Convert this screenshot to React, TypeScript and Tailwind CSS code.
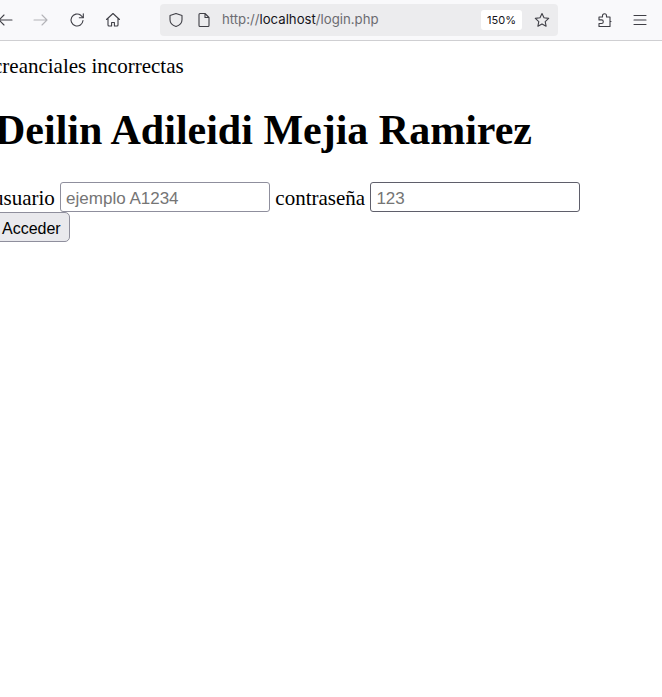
const ToolbarIcon = ({ children, color = "#3f3f46" }: { children: React.ReactNode; color?: string }) => (
  <svg width="16" height="16" viewBox="0 0 16 16" fill="none" stroke={color} strokeWidth="1.1" strokeLinecap="round" strokeLinejoin="round" className="shrink-0">
    {children}
  </svg>
);

export default function App() {
  return (
    <div className="min-h-screen overflow-hidden bg-white font-['Liberation_Serif',serif] text-[21px] text-black">
      {/* Browser toolbar */}
      <div className="flex h-[41px] items-center border-b border-[#cfcfd2] bg-[#f9f9fb]">
        <div className="-ml-[3px] flex items-center gap-5">
          <ToolbarIcon>
            <path d="M15 8H2M7 3L2 8l5 5" />
          </ToolbarIcon>
          <ToolbarIcon color="#b4b4b8">
            <path d="M1 8h13M9 3l5 5-5 5" />
          </ToolbarIcon>
          <ToolbarIcon>
            <path d="M14 8.500A6 6 0 1 1 11.800 3.300L14 5.300" />
            <path d="M14.300 1.800v4h-4" />
          </ToolbarIcon>
          <ToolbarIcon>
            <path d="M1.500 7.500L8 1.500l6.500 6M3 6.500V13a1 1 0 0 0 1 1h2.600v-3.500h2.800V14H12a1 1 0 0 0 1-1V6.500" />
          </ToolbarIcon>
        </div>
        <div className="ml-[39px] flex h-8 w-[398px] items-center rounded bg-[#ececee] pr-2 pl-2 font-['Inter',sans-serif] text-[13.2px] text-[#6b6b70]">
          <ToolbarIcon>
            <path d="M8 1.500l6 2v4.200c0 3.300-2.600 5.700-6 6.800-3.400-1.100-6-3.500-6-6.800V3.500z" />
          </ToolbarIcon>
          <span className="ml-3">
            <ToolbarIcon>
              <path d="M3 2.500a1 1 0 0 1 1-1h5l4 4v8a1 1 0 0 1-1 1H4a1 1 0 0 1-1-1zM9 1.500v4h4" />
            </ToolbarIcon>
          </span>
          <span className="ml-[10px]">
            http://<span className="text-[#15141a]">localhost</span>/login.php
          </span>
          <span className="ml-auto flex h-5 w-[41px] items-center justify-center rounded-[3px] bg-white text-[11px] text-[#15141a]">150%</span>
          <span className="ml-3">
            <ToolbarIcon>
              <path d="M8 1.500l2 4.300 4.700.6-3.500 3.200.9 4.600L8 11.900l-4.100 2.300.9-4.600L1.300 6.400 6 5.800z" />
            </ToolbarIcon>
          </span>
        </div>
        <div className="ml-[39px] flex items-center gap-[19px]">
          <ToolbarIcon>
            <path d="M2 5h3.500V3.700a2 2 0 0 1 4 0V5H13v4.500h1v0H13V14.500H2v-3h2.500a1.800 1.800 0 0 0 0-3.600H2z" />
          </ToolbarIcon>
          <ToolbarIcon>
            <path d="M2 3.500h12M2 8h12M2 12.500h12" />
          </ToolbarIcon>
        </div>
      </div>

      {/* Page content, scrolled slightly to the right */}
      <div className="-ml-[7px] leading-[24px]">
        <p className="pt-[13px]">creanciales incorrectas</p>
        <h1 className="mt-[28px] ml-[2px] text-[42px] leading-[48px] font-bold">Deilin Adileidi Mejia Ramirez</h1>
        <form className="mt-[28px] leading-[24px]">
          usuario{" "}
          <input
            type="text"
            placeholder="ejemplo A1234"
            className="h-[30px] w-[210px] rounded-[3px] border border-[#8f8f9d] bg-white px-[5px] pt-[3px] align-[1px] font-['Liberation_Sans',sans-serif] text-[17px] outline-none placeholder:text-[#757575]"
          />{" "}
          contraseña{" "}
          <input
            type="text"
            placeholder="123"
            className="h-[30px] w-[210px] rounded-[3px] border border-[#5f5f6b] bg-white px-[5px] pt-[3px] align-[1px] font-['Liberation_Sans',sans-serif] text-[17px] outline-none placeholder:text-[#757575]"
          />
          <br />
          <button
            type="button"
            className="h-[30px] rounded-[5px] border border-[#8f8f9d] bg-[#e9e9ed] px-[8px] pt-[3px] font-['Liberation_Sans',sans-serif] text-[16px] text-black"
          >
            Acceder
          </button>
        </form>
      </div>
    </div>
  );
}
